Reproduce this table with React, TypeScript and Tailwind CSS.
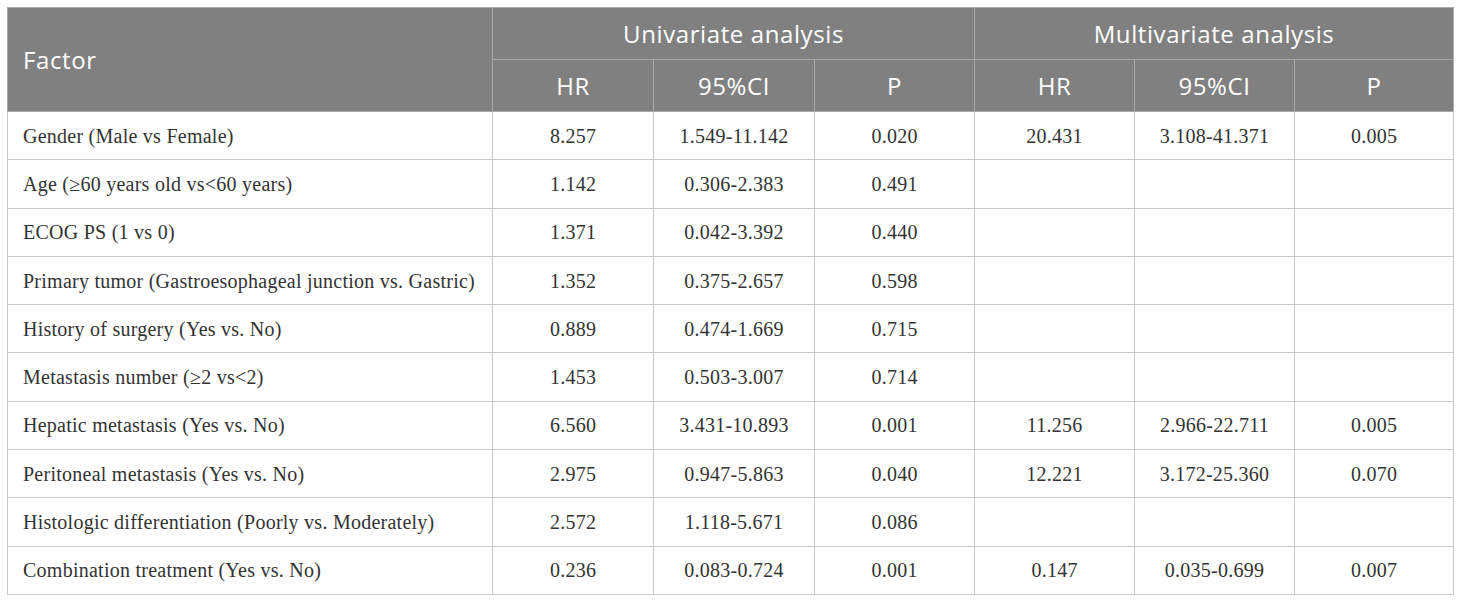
const rows: string[][] = [
  ["Gender (Male vs Female)", "8.257", "1.549-11.142", "0.020", "20.431", "3.108-41.371", "0.005"],
  ["Age (≥60 years old vs<60 years)", "1.142", "0.306-2.383", "0.491", "", "", ""],
  ["ECOG PS (1 vs 0)", "1.371", "0.042-3.392", "0.440", "", "", ""],
  ["Primary tumor (Gastroesophageal junction vs. Gastric)", "1.352", "0.375-2.657", "0.598", "", "", ""],
  ["History of surgery (Yes vs. No)", "0.889", "0.474-1.669", "0.715", "", "", ""],
  ["Metastasis number (≥2 vs<2)", "1.453", "0.503-3.007", "0.714", "", "", ""],
  ["Hepatic metastasis (Yes vs. No)", "6.560", "3.431-10.893", "0.001", "11.256", "2.966-22.711", "0.005"],
  ["Peritoneal metastasis (Yes vs. No)", "2.975", "0.947-5.863", "0.040", "12.221", "3.172-25.360", "0.070"],
  ["Histologic differentiation (Poorly vs. Moderately)", "2.572", "1.118-5.671", "0.086", "", "", ""],
  ["Combination treatment (Yes vs. No)", "0.236", "0.083-0.724", "0.001", "0.147", "0.035-0.699", "0.007"],
];

const sub = ["HR", "95%CI", "P", "HR", "95%CI", "P"];

export default function App() {
  return (
    <div className="min-h-screen bg-white pl-[7px] pt-[7px]">
      <table className="w-[1446px] table-fixed border-collapse">
        <colgroup>
          <col className="w-[485px]" />
          <col className="w-[161px]" />
          <col className="w-[161px]" />
          <col className="w-[160px]" />
          <col className="w-[160px]" />
          <col className="w-[160px]" />
          <col className="w-[159px]" />
        </colgroup>
        <thead className="bg-[#7f807f] text-[24px] tracking-[0.6px] text-white [font-family:'Open_Sans',sans-serif]">
          <tr className="h-[52px]">
            <th rowSpan={2} className="border border-[#a9aaa9] pl-[15px] text-left font-normal">
              Factor
            </th>
            <th colSpan={3} className="border border-[#a9aaa9] font-normal">
              Univariate analysis
            </th>
            <th colSpan={3} className="border border-[#a9aaa9] font-normal">
              Multivariate analysis
            </th>
          </tr>
          <tr className="h-[52px]">
            {sub.map((s, i) => (
              <th key={i} className="border border-[#a9aaa9] font-normal">
                {s}
              </th>
            ))}
          </tr>
        </thead>
        <tbody className="text-[20px] tracking-[0.25px] text-[#333] [font-family:'Liberation_Serif',serif]">
          {rows.map((r, i) => (
            <tr key={i} className="h-[48.3px]">
              {r.map((c, j) => (
                <td
                  key={j}
                  className={
                    j === 0
                      ? "border border-[#c9c9c9] pl-[15px] text-left"
                      : "border border-[#c9c9c9] text-center"
                  }
                >
                  {c}
                </td>
              ))}
            </tr>
          ))}
        </tbody>
      </table>
    </div>
  );
}
